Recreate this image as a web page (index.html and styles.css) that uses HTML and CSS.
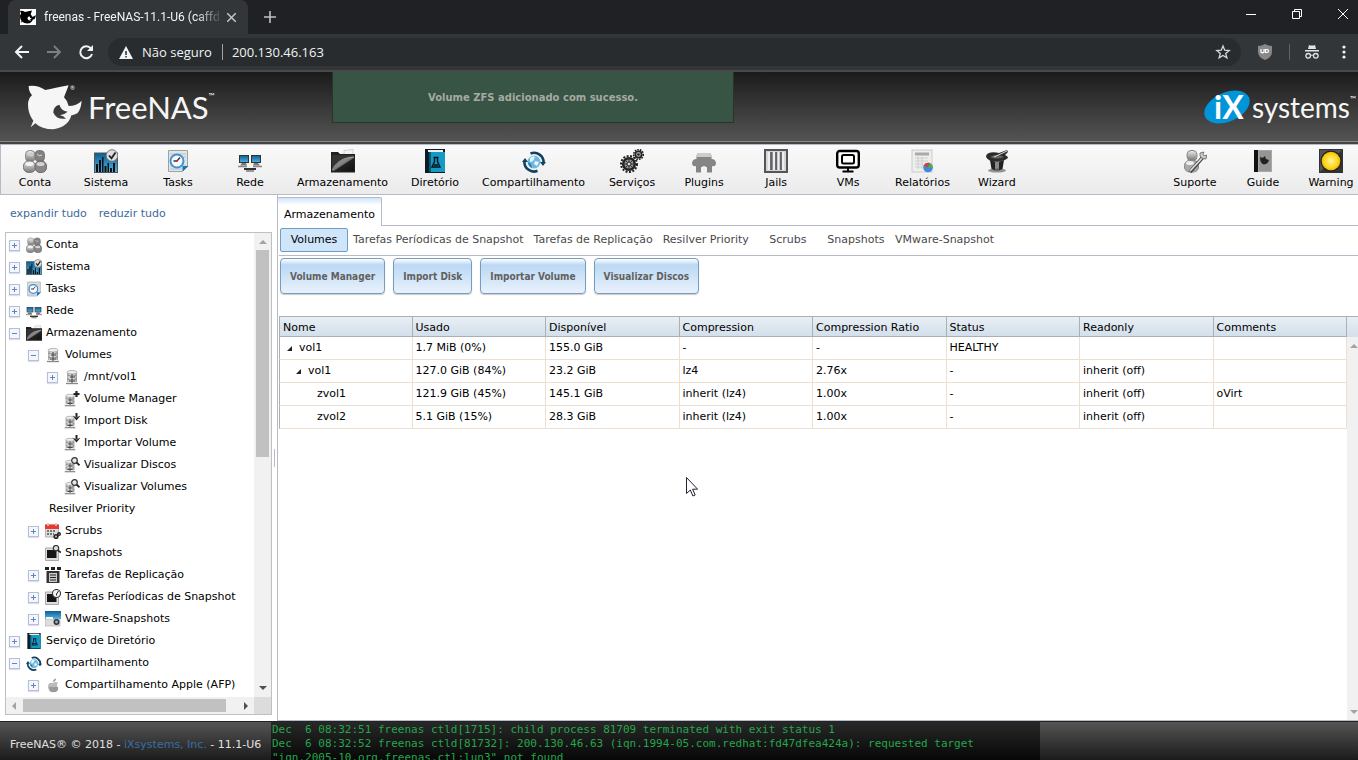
FILE: index.html
```html
<!DOCTYPE html>
<html lang="pt-BR">
<head>
<meta charset="utf-8">
<title>freenas - FreeNAS-11.1-U6</title>
<link rel="stylesheet" href="styles.css">
</head>
<body>
<svg class="defs" aria-hidden="true">
  <defs>
    <linearGradient id="g-grey" x1="0" y1="0" x2="0" y2="1"><stop offset="0" stop-color="#eee"/><stop offset="1" stop-color="#777"/></linearGradient>
    <linearGradient id="g-blue" x1="0" y1="0" x2="0" y2="1"><stop offset="0" stop-color="#0d5d92"/><stop offset="1" stop-color="#4fb4e4"/></linearGradient>
    <linearGradient id="g-dark" x1="0" y1="0" x2="1" y2="1"><stop offset="0" stop-color="#ccc"/><stop offset=".5" stop-color="#777"/><stop offset=".55" stop-color="#222"/><stop offset="1" stop-color="#111"/></linearGradient>
    <linearGradient id="g-cyl" x1="0" y1="0" x2="1" y2="0"><stop offset="0" stop-color="#aaa"/><stop offset=".5" stop-color="#fafafa"/><stop offset="1" stop-color="#999"/></linearGradient>
    <radialGradient id="g-sun"><stop offset="0" stop-color="#fff3a0"/><stop offset=".7" stop-color="#ffd91c"/><stop offset="1" stop-color="#f2b800"/></radialGradient>
  </defs>
  <symbol id="i-users" viewBox="0 0 24 24">
    <rect x="2.500" y="1.500" width="9.500" height="11" rx="4" fill="url(#g-grey)" stroke="#888"/><rect x="12" y="1.500" width="9.500" height="11" rx="4" fill="#858080" stroke="#777"/>
    <rect x=".5" y="12" width="12" height="11.500" rx="5" fill="url(#g-grey)" stroke="#777"/><rect x="12" y="12" width="11.500" height="11.500" rx="5" fill="#8c8787" stroke="#666"/>
    <ellipse cx="6.500" cy="15" rx="4" ry="2" fill="#f2f2f2"/><ellipse cx="17.500" cy="15" rx="4" ry="2" fill="#d5d2d2"/><path d="M5 5q2 3 5 1M14 5q2 3 5 1" stroke="#ddd" fill="none"/>
  </symbol>
  <symbol id="i-system" viewBox="0 0 24 24">
    <rect x=".5" y="4" width="23" height="19.500" fill="url(#g-blue)" stroke="#555"/>
    <path d="M2 23v-8h2v8zM5 23V11h2v12zM8 23V8h1.500v15zM10.500 23v-6h2v6zM13.500 23v-9h1.500v9zM16 23v-4h2v4zM19 23v-9h2v9z" fill="#0a0f14"/>
    <circle cx="18" cy="6.500" r="5.800" fill="#ddd" stroke="#777"/><path d="M15 6.500l2.500 2.800L21.500 3.500" fill="none" stroke="#222" stroke-width="1.800"/>
  </symbol>
  <symbol id="i-tasks" viewBox="0 0 24 24">
    <path d="M2.500 1.500h19v16l-5 5h-14z" fill="#dfe6e6" stroke="#98a4a4"/><path d="M4 5h16M4 8h16M4 17h16M4 20h12" stroke="#b8c2c2"/>
    <path d="M16.500 22.500v-5.500h6z" fill="#1677b8"/><circle cx="11" cy="12" r="6.500" fill="#f6fbff" stroke="#4b8fd0" stroke-width="2"/><path d="M11 12h-3.500M11 12l3-3.500" stroke="#333" stroke-width="1.300"/><circle cx="11" cy="12" r="1" fill="#c33"/>
  </symbol>
  <symbol id="i-net" viewBox="0 0 24 24">
    <rect x="1.500" y="6.500" width="9" height="7" fill="url(#g-blue)" stroke="#333"/><rect x="13.500" y="6.500" width="9" height="7" fill="url(#g-blue)" stroke="#333"/>
    <path d="M4 14h4l1 2.500H2zM16 14h4l2 2.500h-7z" fill="#777"/><path d="M0 17.500h9M15 17.500h9" stroke="#888" stroke-width="1.500"/><path d="M6 19h12v2H6z" fill="#333"/><path d="M8 21h8v2H8z" fill="#999"/>
  </symbol>
  <symbol id="i-folder" viewBox="0 0 24 24">
    <path d="M13 6V1.500l9-1V6z" fill="#f3f3f3" stroke="#bbb" stroke-width=".6"/><path d="M0 3h7l2 2h15v18.500H0z" fill="#202020"/><path d="M1 6h22v16H1z" fill="#333"/>
    <path d="M1.500 22C5 14 12 9 23 8v14z" fill="url(#g-dark)"/><path d="M1.500 21C5 13 12 8.500 23 8" stroke="#ccc" stroke-width=".7" fill="none"/>
  </symbol>
  <symbol id="i-book" viewBox="0 0 24 24">
    <path d="M2 0h20v24H2z" fill="#0b1c26"/><path d="M5 1h15V3H5z" fill="#eee"/><path d="M6 3h16v20H6z" fill="#159ac4"/><path d="M6 3h2v20H6z" fill="#0a5878"/>
    <path d="M10.500 8.500h5M11.500 9v3.500L9 18h8l-2.500-5.500V9M11 16h4" fill="none" stroke="#06131a" stroke-width="1.400"/>
  </symbol>
  <symbol id="i-share" viewBox="0 0 24 24">
    <circle cx="12" cy="13" r="6.500" fill="#6fb9df"/><path d="M8 9q3-3 5-1l-2 4-3 1zM13 12l4 1-2 4-3-2z" fill="#e9f6fc"/><path d="M6 13l3 2 1 4q-4-2-4-6z" fill="#2680b2"/>
    <path d="M8.500 4.500A9.500 9.500 0 0 1 21.500 14M15.500 21.800A9.500 9.500 0 0 1 2.500 12" fill="none" stroke="#124260" stroke-width="2.600"/><path d="M18 13h6l-3 4zM0 13l3-4 3 4z" fill="#124260"/>
  </symbol>
  <symbol id="i-gears" viewBox="0 0 24 24">
    <circle cx="9" cy="15" r="8" fill="none" stroke="#222" stroke-width="2" stroke-dasharray="2 1.500"/><circle cx="9" cy="15" r="5.800" fill="#999" stroke="#222" stroke-width="2.500"/><path d="M9 9v12M3 15h12M5 11l8 8M13 11l-8 8" stroke="#333"/><circle cx="9" cy="15" r="2" fill="#ddd" stroke="#222"/>
    <circle cx="18.500" cy="5.500" r="4.800" fill="none" stroke="#222" stroke-width="1.600" stroke-dasharray="1.600 1"/><circle cx="18.500" cy="5.500" r="3.200" fill="#aaa" stroke="#222" stroke-width="1.600"/><circle cx="18.500" cy="5.500" r="1.200" fill="#222"/>
  </symbol>
  <symbol id="i-plug" viewBox="0 0 24 24">
    <path d="M7 4h10q3 0 2.500 6q4.500 0 4.500 5q-1 3-4 2v6.500h-5v-5q-3-3-6 0v5H4V17q-3 1-4-2q0-5 4.500-5Q4 4 7 4z" fill="#858585"/><path d="M7 4h10q2.500 0 2.500 4H4.500Q4.500 4 7 4z" fill="#ccc"/>
  </symbol>
  <symbol id="i-jail" viewBox="0 0 24 24">
    <rect x="1" y="1" width="22" height="22" fill="#d4d4d8" stroke="#555" stroke-width="2"/><rect x="4" y="3" width="16" height="18" fill="#73737a"/><path d="M5 3v18M10 3v18M14.500 3v18M19 3v18" stroke="#eee" stroke-width="2.400"/><path d="M7 3v18M12 3v18M17 3v18" stroke="#555"/>
  </symbol>
  <symbol id="i-vm" viewBox="0 0 24 24">
    <rect x="1.200" y="2" width="21.600" height="16.500" rx="2.500" fill="#fff" stroke="#000" stroke-width="2.400"/><rect x="6" y="6" width="12" height="8.500" rx="1.500" fill="none" stroke="#000" stroke-width="2"/><path d="M12 19v3M6.500 22.500h11" stroke="#000" stroke-width="2"/>
  </symbol>
  <symbol id="i-report" viewBox="0 0 24 24">
    <rect x="2" y="1" width="20" height="22" fill="#eee" stroke="#ccc"/><rect x="5" y="3.500" width="14" height="3" fill="#aaa"/><path d="M5 9h13M5 12h13M5 15h8M5 18h7M8 8v12M12 8v12" stroke="#c6c6c6" stroke-width=".8"/>
    <circle cx="18" cy="18.500" r="4.800" fill="#3d8bd8"/><path d="M18 18.500l-4.500-2Q16 13 20 14z" fill="#d8402f"/><path d="M18 18.500L20 14q3 2 2.800 5z" fill="#4cae4c"/>
  </symbol>
  <symbol id="i-hat" viewBox="0 0 24 24">
    <path d="M1 8Q1 4 6 3.500Q10 3 14 4L22 1l1 2-3 3q3 1 3 3Q20 12 12 12.500T1 8z" fill="#2c2c2c"/><path d="M5 8Q12 4 19 8Q12 11 5 8z" fill="#666"/><path d="M5 11q7 3 14 0l-1.500 9q-5.500 3-11 0z" fill="#222"/><path d="M10 13v8h4v-8z" fill="#888"/><ellipse cx="12" cy="21.500" rx="9" ry="2" fill="#333" opacity=".5"/><path d="M9 8l13-6" stroke="#ddd"/>
  </symbol>
  <symbol id="i-support" viewBox="0 0 24 24">
    <rect x="4" y="1.500" width="10" height="10" rx="4" fill="url(#g-grey)" stroke="#888"/><rect x="1.500" y="11.500" width="14" height="11.500" rx="5" fill="#aaa" stroke="#888"/><ellipse cx="7" cy="14" rx="4" ry="2" fill="#eee"/>
    <path d="M7 23L20 8" stroke="#444" stroke-width="3.500"/><path d="M7 22L20 8" stroke="#ddd" stroke-width="1.800"/><path d="M17 4q-1 6 6 6l1-4-3 1-1-2 1-2z" fill="#ccc" stroke="#555" stroke-width=".7"/>
  </symbol>
  <symbol id="i-guide" viewBox="0 0 24 24">
    <path d="M3 1h18v22H3z" fill="#888"/><path d="M3 1h4v22H3z" fill="#111"/><path d="M7.500 1.500h13v21h-13z" fill="#959595" stroke="#bbb" stroke-width=".6"/><path d="M9 8q3 2 5-1l1 3 3 1q-1 4-5 4.500-4-.5-4-7.500z" fill="#222"/>
  </symbol>
  <symbol id="i-warn" viewBox="0 0 24 24"><rect width="24" height="24" fill="#333"/><path d="M1 1h22L1 23z" fill="#555"/><circle cx="12" cy="12" r="10.500" fill="#222"/><circle cx="12" cy="12" r="9.300" fill="url(#g-sun)"/></symbol>
  <symbol id="i-disk" viewBox="0 0 16 16">
    <path d="M3 3h10v10H3z" fill="url(#g-cyl)"/><ellipse cx="8" cy="3.200" rx="5" ry="1.800" fill="#eee" stroke="#999" stroke-width=".7"/><path d="M3 6q5 2 10 0M3 10q5 2 10 0" fill="none" stroke="#888" stroke-width=".8"/>
    <path d="M8 5v9M6 8h5M5 12h6" stroke="#444" stroke-width="1.100"/><path d="M2 14.500h12" stroke="#888" stroke-width="1.400"/>
  </symbol>
  <symbol id="i-disk-add" viewBox="0 0 16 16"><svg y="2" x="-1" width="14" height="14"><use href="#i-disk"/></svg><path d="M12.500 0v6M9.500 3h6" stroke="#222" stroke-width="2.200"/></symbol>
  <symbol id="i-disk-down" viewBox="0 0 16 16"><svg y="2" x="-1" width="14" height="14"><use href="#i-disk"/></svg><path d="M12.500 0v4" stroke="#222" stroke-width="2"/><path d="M8.500 2.500l4 5 4-5-4 2z" fill="#222"/></symbol>
  <symbol id="i-disk-find" viewBox="0 0 16 16"><svg y="2" x="-1" width="14" height="14"><use href="#i-disk"/></svg><circle cx="10.500" cy="3.500" r="2.800" fill="#e6e6e6" stroke="#333" stroke-width="1.200"/><path d="M12.500 5.500l3 2.800" stroke="#222" stroke-width="1.800"/></symbol>
  <symbol id="i-cal" viewBox="0 0 16 16"><path d="M.5 2h13v12H.5z" fill="#ddd" stroke="#999" stroke-width=".7"/><path d="M0 1.500h14v4.500H0z" fill="#e83a2e"/><path d="M3 0v3M11 0v3" stroke="#ccc" stroke-width="1.500"/><path d="M2 8h9M2 11h7" stroke="#555" stroke-width="1.500" stroke-dasharray="2 1"/><circle cx="11" cy="13.500" r="1.800" fill="none" stroke="#222" stroke-width="1.600"/><circle cx="14" cy="11" r="1.300" fill="none" stroke="#222" stroke-width="1.400"/></symbol>
  <symbol id="i-snap" viewBox="0 0 16 16"><path d="M.5 3h13v12.500H.5z" fill="#ddd" stroke="#aaa"/><path d="M2 5h9.500v8H2z" fill="#161616"/><circle cx="11" cy="3.200" r="2.700" fill="#ddd" stroke="#333" stroke-width="1.200"/><path d="M13 5.500l3 2" stroke="#222" stroke-width="1.600"/></symbol>
  <symbol id="i-rep" viewBox="0 0 16 16"><path d="M0 0h4v3H0zM6 0h4v3H6zM12 0h4v3h-4z" fill="#222"/><path d="M1.500 4h13v12h-13z" fill="#333"/><path d="M4 6h8v9H4z" fill="#ccc"/><path d="M5 8h6M5 10.500h6M5 13h6" stroke="#222" stroke-width="1.200"/></symbol>
  <symbol id="i-snapclock" viewBox="0 0 16 16"><path d="M.5 3h13v12.500H.5z" fill="#ddd" stroke="#aaa"/><path d="M2 5h9.500v8H2z" fill="#161616"/><circle cx="11.500" cy="4.500" r="4" fill="#f4f4f4" stroke="#333" stroke-width="1.100"/><path d="M11.500 6.500V5l2-3" stroke="#222" fill="none"/></symbol>
  <symbol id="i-vmsnap" viewBox="0 0 16 16"><path d="M0 0h16v8H0z" fill="url(#g-blue)"/><path d="M0 8h15v7H0z" fill="#ddd" stroke="#aaa" stroke-width=".6"/><path d="M1 6h7v2H1z" fill="#f3f3f3"/><circle cx="11.500" cy="11" r="3" fill="#333"/><circle cx="11.500" cy="11" r="1.400" fill="#9ac"/></symbol>
  <symbol id="i-apple" viewBox="0 0 16 16"><path d="M8 6q3-2 5 0-2 2 0 5-2 5-4 4-1-.7-2 0-3 1-4-5 0-5 5-4z" fill="#bbb"/><path d="M4 10h9q1 5-4 5-4 1-5-5z" fill="#999"/><path d="M8 5q0-3 3-3.500Q11 4 8 5z" fill="#999"/></symbol>
  <symbol id="i-shark" viewBox="84 256 162 138"><path fill-rule="evenodd" fill="currentColor" d="M86 262Q112 258 136 274Q165 268 206 260L192 296Q204 308 206 322Q230 322 245 306Q243 332 232 344Q218 350 214 350Q205 385 160 392Q125 392 106 374L92 386L100 366Q84 345 84 318Q84 300 96 290Q86 278 86 262ZM178 318Q160 322 160 342Q170 364 198 360Q190 351 180 350Q196 346 203 339Q184 337 178 318Z"/></symbol>
</svg>

<div class="browser">
  <div class="tabbar">
    <div class="tab">
      <span class="favicon"><svg><use href="#i-shark"/></svg></span>
      <span class="tab-title">freenas - FreeNAS-11.1-U6 (caffd</span>
      <button class="tab-close" aria-label="Fechar guia"><svg viewBox="0 0 8 8"><path d="M0 0l8 8M8 0L0 8" stroke="#c4c7ca" stroke-width="1.300"/></svg></button>
    </div>
    <button class="newtab" aria-label="Nova guia"><svg viewBox="0 0 12 12"><path d="M6 0v12M0 6h12" stroke="#bdc1c6" stroke-width="1.600"/></svg></button>
    <div class="win">
      <button aria-label="Minimizar"><svg viewBox="0 0 10 10"><path d="M0 5.500h10" stroke="#fff"/></svg></button>
      <button aria-label="Restaurar"><svg viewBox="0 0 10 10"><path d="M.5 2.500h7v7h-7zM2.500 2.500v-2h7v7h-2" fill="none" stroke="#fff"/></svg></button>
      <button aria-label="Fechar"><svg viewBox="0 0 10 10"><path d="M0 0l10 10M10 0L0 10" stroke="#fff"/></svg></button>
    </div>
  </div>
  <div class="toolbar">
    <button aria-label="Voltar"><svg viewBox="0 0 16 16"><path d="M15 8H2M8 2L2 8l6 6" fill="none" stroke="#f1f3f4" stroke-width="2"/></svg></button>
    <button aria-label="Avançar"><svg viewBox="0 0 16 16"><path d="M1 8h13M8 2l6 6-6 6" fill="none" stroke="#7d8083" stroke-width="1.800"/></svg></button>
    <button aria-label="Recarregar"><svg viewBox="0 0 16 16"><path d="M13 4.500A6 6 0 1 0 14 10" fill="none" stroke="#f1f3f4" stroke-width="2"/><path d="M15 1v6H9z" fill="#f1f3f4"/></svg></button>
    <div class="omnibox">
      <svg class="alert" viewBox="0 0 14 13"><path d="M7 0l7 13H0z" fill="#f1f3f4"/><path d="M7 5v4M7 10v1.500" stroke="#292c2f" stroke-width="1.500"/></svg>
      <label for="url">Não seguro</label>
      <input id="url" type="text" value="200.130.46.163">
      <button aria-label="Favorito"><svg viewBox="0 0 16 16"><path d="M8 2l1.700 4.200 4.500.3-3.500 2.900 1.200 4.400L8 11.400l-3.900 2.400 1.200-4.400L1.800 6.500l4.500-.3z" fill="none" stroke="#d5d7da" stroke-width="1.300"/></svg></button>
    </div>
    <button class="shield" aria-label="uBlock"><svg viewBox="0 0 16 16"><path d="M8 0q3 2 7 2v6q0 5-7 8-7-3-7-8V2q4 0 7-2z" fill="#888"/><path d="M4 5v3q1.500 1.500 3 0V5M10 5.500a1.500 1.500 0 1 1 0 3H8.500v-3z" fill="none" stroke="#fff" stroke-width="1.200"/></svg></button>
    <span class="divider"></span>
    <button class="incog" aria-label="Anônimo"><svg viewBox="0 0 16 16"><path d="M4 5l1-4q3 1 6 0l1 4zM1 6h14v1.500H1z" fill="#e0e2e4"/><circle cx="4.200" cy="11.800" r="2.300" fill="none" stroke="#e0e2e4" stroke-width="1.300"/><circle cx="11.800" cy="11.800" r="2.300" fill="none" stroke="#e0e2e4" stroke-width="1.300"/><path d="M6.500 11.500q1.500-1 3 0" stroke="#e0e2e4" fill="none"/></svg></button>
    <button class="dots" aria-label="Menu"><svg viewBox="0 0 4 16"><circle cx="2" cy="3" r="1.600" fill="#f1f3f4"/><circle cx="2" cy="8" r="1.600" fill="#f1f3f4"/><circle cx="2" cy="13" r="1.600" fill="#f1f3f4"/></svg></button>
  </div>
</div>

<header class="banner">
  <a class="brand" href="#"><svg class="shark"><use href="#i-shark"/></svg><sup class="reg">®</sup><span>FreeNAS</span><sup>™</sup></a>
  <div class="toast" role="status">Volume ZFS adicionado com sucesso.</div>
  <a class="ix" href="#">
    <svg viewBox="0 0 48 38"><ellipse cx="23" cy="19" rx="24" ry="14.500" transform="rotate(-24 23 19)" fill="#0095d9"/><text x="10" y="31" class="ix-mark">iX</text></svg>
    <span>systems</span><sup>™</sup></a>
</header>

<nav class="tools">
  <button><svg><use href="#i-users"/></svg>Conta</button>
  <button><svg><use href="#i-system"/></svg>Sistema</button>
  <button><svg><use href="#i-tasks"/></svg>Tasks</button>
  <button><svg><use href="#i-net"/></svg>Rede</button>
  <button><svg><use href="#i-folder"/></svg>Armazenamento</button>
  <button><svg><use href="#i-book"/></svg>Diretório</button>
  <button><svg><use href="#i-share"/></svg>Compartilhamento</button>
  <button><svg><use href="#i-gears"/></svg>Serviços</button>
  <button><svg><use href="#i-plug"/></svg>Plugins</button>
  <button><svg><use href="#i-jail"/></svg>Jails</button>
  <button><svg><use href="#i-vm"/></svg>VMs</button>
  <button><svg><use href="#i-report"/></svg>Relatórios</button>
  <button><svg><use href="#i-hat"/></svg>Wizard</button>
  <div class="tools-right">
    <button><svg><use href="#i-support"/></svg>Suporte</button>
    <button><svg><use href="#i-guide"/></svg>Guide</button>
    <button><svg><use href="#i-warn"/></svg>Warning</button>
  </div>
</nav>

<div class="body">
  <aside class="side">
    <div class="side-links"><a href="#">expandir tudo</a><a href="#">reduzir tudo</a></div>
    <div class="treebox">
      <ul class="tree">
        <li><div class="row"><button class="ex" aria-label="Expandir"></button><svg><use href="#i-users"/></svg>Conta</div></li>
        <li><div class="row"><button class="ex" aria-label="Expandir"></button><svg><use href="#i-system"/></svg>Sistema</div></li>
        <li><div class="row"><button class="ex" aria-label="Expandir"></button><svg><use href="#i-tasks"/></svg>Tasks</div></li>
        <li><div class="row"><button class="ex" aria-label="Expandir"></button><svg><use href="#i-net"/></svg>Rede</div></li>
        <li><div class="row"><button class="ex open" aria-label="Recolher"></button><svg><use href="#i-folder"/></svg>Armazenamento</div>
          <ul>
            <li><div class="row"><button class="ex open" aria-label="Recolher"></button><svg><use href="#i-disk"/></svg>Volumes</div>
              <ul>
                <li><div class="row"><button class="ex" aria-label="Expandir"></button><svg><use href="#i-disk"/></svg>/mnt/vol1</div></li>
                <li><div class="row"><i class="leaf"></i><svg><use href="#i-disk-add"/></svg>Volume Manager</div></li>
                <li><div class="row"><i class="leaf"></i><svg><use href="#i-disk-down"/></svg>Import Disk</div></li>
                <li><div class="row"><i class="leaf"></i><svg><use href="#i-disk-down"/></svg>Importar Volume</div></li>
                <li><div class="row"><i class="leaf"></i><svg><use href="#i-disk-find"/></svg>Visualizar Discos</div></li>
                <li><div class="row"><i class="leaf"></i><svg><use href="#i-disk-find"/></svg>Visualizar Volumes</div></li>
              </ul></li>
            <li><div class="row bare"><i class="leaf"></i>Resilver Priority</div></li>
            <li><div class="row"><button class="ex" aria-label="Expandir"></button><svg><use href="#i-cal"/></svg>Scrubs</div></li>
            <li><div class="row"><i class="leaf"></i><svg><use href="#i-snap"/></svg>Snapshots</div></li>
            <li><div class="row"><button class="ex" aria-label="Expandir"></button><svg><use href="#i-rep"/></svg>Tarefas de Replicação</div></li>
            <li><div class="row"><button class="ex" aria-label="Expandir"></button><svg><use href="#i-snapclock"/></svg>Tarefas Períodicas de Snapshot</div></li>
            <li><div class="row"><button class="ex" aria-label="Expandir"></button><svg><use href="#i-vmsnap"/></svg>VMware-Snapshots</div></li>
          </ul></li>
        <li><div class="row"><button class="ex" aria-label="Expandir"></button><svg><use href="#i-book"/></svg>Serviço de Diretório</div></li>
        <li><div class="row"><button class="ex open" aria-label="Recolher"></button><svg><use href="#i-share"/></svg>Compartilhamento</div>
          <ul><li><div class="row"><button class="ex" aria-label="Expandir"></button><svg><use href="#i-apple"/></svg>Compartilhamento Apple (AFP)</div></li></ul></li>
      </ul>
      <div class="vbar"><i class="arrow up"></i><i class="thumb"></i><i class="arrow down"></i></div>
      <div class="hbar"><i class="arrow left"></i><i class="thumb"></i><i class="arrow right"></i></div>
      <div class="corner"></div>
    </div>
  </aside>
  <div class="splitter"><i></i></div>
  <main class="main">
    <div class="tabs"><button>Armazenamento</button></div>
    <div class="subtabs">
      <button class="on">Volumes</button><button>Tarefas Períodicas de Snapshot</button><button>Tarefas de Replicação</button><button>Resilver Priority</button><button>Scrubs</button><button>Snapshots</button><button>VMware-Snapshot</button>
    </div>
    <div class="actions"><button>Volume Manager</button><button>Import Disk</button><button>Importar Volume</button><button>Visualizar Discos</button></div>
    <div class="grid">
      <table>
        <thead><tr><th>Nome</th><th>Usado</th><th>Disponível</th><th>Compression</th><th>Compression Ratio</th><th>Status</th><th>Readonly</th><th>Comments</th></tr></thead>
        <tbody>
          <tr><td class="d1"><i class="tri"></i>vol1</td><td>1.7 MiB (0%)</td><td>155.0 GiB</td><td>-</td><td>-</td><td>HEALTHY</td><td></td><td></td></tr>
          <tr><td class="d2"><i class="tri"></i>vol1</td><td>127.0 GiB (84%)</td><td>23.2 GiB</td><td>lz4</td><td>2.76x</td><td>-</td><td>inherit (off)</td><td></td></tr>
          <tr><td class="d3">zvol1</td><td>121.9 GiB (45%)</td><td>145.1 GiB</td><td>inherit (lz4)</td><td>1.00x</td><td>-</td><td>inherit (off)</td><td>oVirt</td></tr>
          <tr><td class="d3">zvol2</td><td>5.1 GiB (15%)</td><td>28.3 GiB</td><td>inherit (lz4)</td><td>1.00x</td><td>-</td><td>inherit (off)</td><td></td></tr>
        </tbody>
      </table>
      <div class="gridbar"><div class="gridhead"></div><i class="arrow up"></i><i class="arrow down"></i></div>
    </div>
  </main>
</div>

<footer class="foot">
  <div class="copy">FreeNAS® © 2018 - <a href="#">iXsystems, Inc.</a> - 11.1-U6</div>
  <pre class="console">Dec  6 08:32:51 freenas ctld[1715]: child process 81709 terminated with exit status 1
Dec  6 08:32:52 freenas ctld[81732]: 200.130.46.63 (iqn.1994-05.com.redhat:fd47dfea424a): requested target
"iqn.2005-10.org.freenas.ctl:lun3" not found</pre>
</footer>
<svg class="cursor" viewBox="0 0 12 20"><path d="M.5.5v16l3.800-3.500 2.600 6 2.300-1-2.600-5.800h5z" fill="#fff" stroke="#223"/></svg>
</body>
</html>
```
FILE: styles.css
```css
* { box-sizing: border-box; }
body { margin: 0; height: 100vh; display: flex; flex-direction: column; overflow: hidden; background: #fff; color: #000; font: 11px/16px "DejaVu Sans", Verdana, sans-serif; }
button { border: 0; padding: 0; margin: 0; background: none; font: inherit; color: inherit; white-space: nowrap; }
a { text-decoration: none; }
svg { flex: none; }
ul { list-style: none; margin: 0; padding: 0; }
.defs { position: absolute; width: 0; height: 0; }

/* Browser frame */
.browser { flex: none; font-family: "Open Sans", "Segoe UI", sans-serif; background: #323639; color: #f1f3f4; border-bottom: 2px solid #4a4948; }
.tabbar { height: 34px; display: flex; align-items: center; background: #202124; padding-left: 8px; }
.tab { width: 240px; height: 34px; display: flex; align-items: center; padding: 0 12px; background: #323639; border-radius: 8px 8px 0 0; }
.favicon { width: 16px; height: 16px; background: #fff; color: #000; display: flex; align-items: center; justify-content: center; }
.favicon svg { width: 16px; height: 14px; }
.tab-title { flex: 1; margin: 0 4px 0 8px; font-family: Roboto, sans-serif; font-size: 12px; overflow: hidden; white-space: nowrap; mask-image: linear-gradient(90deg, #000 85%, transparent); }
.tab-close { display: flex; }
.tab-close svg { width: 9px; height: 9px; }
.newtab { margin-left: 16px; display: flex; }
.newtab svg { width: 12px; height: 12px; }
.win { margin-left: auto; display: flex; align-self: flex-start; }
.win button { width: 46px; height: 28px; display: flex; align-items: center; justify-content: center; }
.win button:last-child { width: 30px; margin-left: 8px; }
.win svg { width: 10px; height: 10px; }
.toolbar { height: 36px; display: flex; align-items: center; padding: 0 12px 0 14px; }
.toolbar > button { margin-right: 16px; display: flex; }
.toolbar svg { width: 16px; height: 16px; }
.omnibox { flex: 1; height: 28px; margin-left: -2px; margin-right: 16px; padding: 0 10px; display: flex; align-items: center; background: #282c2f; border-radius: 14px; font-size: 13px; }
.omnibox .alert { width: 16px; height: 13px; margin-right: 8px; }
.omnibox label { padding-right: 10px; border-right: 1px solid #a0a3a6; line-height: 16px; }
.omnibox input { flex: 1; min-width: 0; margin-left: 9px; padding: 0; border: 0; background: none; color: #f1f3f4; font: inherit; }
.omnibox button { display: flex; }
.divider { width: 1px; height: 16px; margin-right: 14px; background: #5f6368; }
.toolbar .incog { margin-right: 22px; }
.toolbar .dots { margin: 0; }
.toolbar .dots svg { width: 4px; }

/* Banner */
.banner { flex: none; position: relative; height: 72px; display: flex; align-items: center; justify-content: space-between; padding: 0 0 0 28px; background: linear-gradient(#1b1b1b, #565555); border-bottom: 2px solid #444; box-shadow: inset 0 -1px #8a8a8a; font-family: Lato, sans-serif; font-weight: 400; }
.banner a { display: flex; align-items: center; color: #f6f6f6; }
.banner sup { width: 8px; font-size: 8px; line-height: 8px; align-self: flex-start; vertical-align: baseline; }
.shark { width: 54px; height: 46px; }
.brand .reg { width: 0; margin-left: -12px; margin-right: 18px; font-size: 6px; }
.brand span { font-size: 31px; line-height: 46px; }
.brand sup { padding-top: 8px; }
.brand .reg { padding-top: 0; }
.ix svg { width: 48px; height: 38px; overflow: visible; }
.ix-mark { font: 700 32px Lato, sans-serif; fill: #fff; }
.ix span { font-size: 28px; line-height: 40px; }
.ix sup { padding-top: 8px; }
.toast { position: absolute; left: 332px; top: 0; width: 402px; height: 51px; padding-top: 2px; display: flex; align-items: center; justify-content: center; background: #375444; border: 1px solid #26352b; border-top: 0; color: #a5aaa4; font: bold 10px/16px "DejaVu Sans", Verdana, sans-serif; }

/* Main tool bar */
.tools { flex: none; height: 51px; display: flex; background: linear-gradient(#fafafa, #ebebeb); border-bottom: 1px solid #b5bcc7; box-shadow: inset 1px 1px #b5bcc7; }
.tools button { min-width: 72px; padding: 5px 11px 0; display: flex; flex-direction: column; align-items: center; gap: 2px; }
.tools > button:first-child { min-width: 70px; }
.tools svg { width: 24px; height: 24px; }
.tools-right { margin-left: auto; display: flex; gap: 14px; }
.tools-right button { min-width: 54px; padding: 5px 0 0; }

/* Tree */
.body { flex: 1; min-height: 0; display: flex; }
.side { width: 272px; flex: none; display: flex; flex-direction: column; padding: 11px 0 6px 5px; }
.side-links { display: flex; gap: 12px; padding: 0 5px 10px; }
.side-links a { color: #41699a; }
.treebox { flex: 1; min-height: 0; display: grid; grid-template: minmax(0, 1fr) 17px / minmax(0, 1fr) 17px; border: 1px solid #c0c0c0; }
.tree { overflow: hidden; white-space: nowrap; }
.tree ul { padding-left: 19px; }
.row { height: 22px; display: flex; align-items: center; padding: 2px 0 0 3px; }
.row svg { width: 16px; height: 16px; margin: 0 4px 0 6px; }
.leaf { width: 11px; }
.bare .leaf { width: 21px; }
.ex { width: 11px; height: 11px; border: 1px solid #b5bfd6; box-shadow: 0 1px 1px #dde; background: linear-gradient(#6384bb, #6384bb) center / 5px 1px no-repeat, linear-gradient(#6384bb, #6384bb) center / 1px 5px no-repeat, #f3f6fc; }
.ex.open { background: linear-gradient(#6384bb, #6384bb) center / 5px 1px no-repeat, #f3f6fc; }
.vbar, .hbar { display: flex; align-items: center; background: #f1f1f1; }
.vbar { flex-direction: column; padding: 7px 0; }
.hbar { padding: 0 6px; }
.thumb { background: #c1c1c1; }
.vbar .thumb { width: 13px; height: 46%; margin-top: 6px; }
.hbar .thumb { height: 13px; width: 203px; margin-left: 7px; }
.vbar .down { margin-top: auto; }
.hbar .right { margin-left: auto; }
.corner { background: #dcdcdc; }
.arrow { flex: none; border: 4px solid transparent; }
.arrow.up { border-bottom-color: #a3a3a3; border-top: 0; }
.arrow.down { border-top-color: #505050; border-bottom: 0; }
.arrow.left { border-right-color: #a3a3a3; border-left: 0; }
.arrow.right { border-left-color: #505050; border-right: 0; }
.splitter { width: 5px; flex: none; display: flex; align-items: center; justify-content: center; }
.splitter i { width: 1px; height: 18px; background: #b5bcc7; }

/* Content pane */
.main { flex: 1; min-width: 0; display: flex; flex-direction: column; border-left: 1px solid #b5bcc7; border-bottom: 1px solid #b5bcc7; padding-left: 1px; }
.tabs { height: 31px; padding-top: 2px; display: flex; border-bottom: 1px solid #b5bcc7; margin-left: -2px; }
.tabs button { height: 29px; padding: 6px 6px 0; border: 1px solid #b5bcc7; border-bottom: 0; border-radius: 2px 2px 0 0; background: linear-gradient(#cfe5fa, #fff 7px); }
.subtabs { height: 30px; padding: 2px 1px; display: flex; align-items: flex-start; border-bottom: 1px solid #b5bcc7; color: #494949; }
.subtabs button { height: 24px; min-width: 68px; padding: 0 4px; border: 1px solid transparent; }
.subtabs .on { background: #cfe5fa; border-color: #759dc0; border-radius: 2px; color: #000; }
.actions { padding: 2px 1px 22px; display: flex; gap: 8px; }
.actions button { height: 36px; padding: 1px 9px 0; border: 1px solid #759dc0; border-radius: 4px; background: linear-gradient(#fff, #bcd8f4 6px, #e9f2fc); box-shadow: 0 1px 1px #ccc; color: #606060; font: bold 10px/16px "DejaVu Sans Condensed", "DejaVu Sans", sans-serif; }
.grid { flex: 1; min-height: 0; display: grid; grid-template-columns: minmax(0, 1fr) 11px; }
table { width: 100%; align-self: start; table-layout: fixed; border-spacing: 0; }
th, td { padding: 0 3px; text-align: left; white-space: nowrap; font-weight: normal; }
th { height: 21px; padding-top: 2px; border: 1px solid #acafb3; border-left: 0; background: linear-gradient(#e8eff6, #d3dfea); }
td { height: 23px; border: solid #eedfd3; border-width: 0 1px 1px 0; }
th:first-child, td:first-child { border-left: 1px solid #acafb3; }
.d1 { padding-left: 7px; }
.d2 { padding-left: 16px; }
.d3 { padding-left: 37px; }
.tri { display: inline-block; width: 0; height: 0; margin-right: 7px; border-left: 5px solid transparent; border-bottom: 5px solid #222; }
.gridbar { display: flex; flex-direction: column; align-items: flex-end; overflow: hidden; background: #f1f1f1; }
.gridhead { width: 11px; height: 21px; flex: none; margin-bottom: 7px; border-top: 1px solid #acafb3; background: linear-gradient(#e8eff6, #d3dfea); }
.gridbar .down { margin: auto 0 6px; border-top-color: #a3a3a3; }

/* Footer */
.foot { flex: none; height: 39px; display: flex; overflow: hidden; background: linear-gradient(#555, #1b1b1b); border-top: 1px solid #222; color: #e0e0e0; }
.copy { width: 271px; flex: none; padding: 15px 0 0 10px; white-space: nowrap; }
.copy a { color: #3a6ea5; }
.console { width: 769px; margin: 0; padding: 1px 0 0 1px; background: linear-gradient(#282828, #070707); color: #22a74a; font: 11px/14px "DejaVu Sans Mono", monospace; }
.cursor { position: absolute; left: 686px; top: 477px; width: 12px; height: 20px; }
```
